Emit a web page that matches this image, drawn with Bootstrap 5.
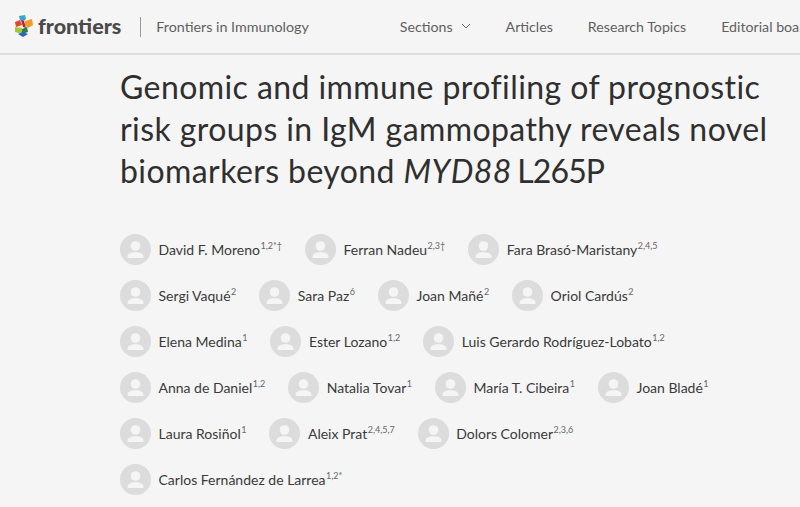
<!DOCTYPE html>
<html lang="en"><head><meta charset="utf-8">
<link href="https://cdn.jsdelivr.net/npm/bootstrap@5.3.0/dist/css/bootstrap.min.css" rel="stylesheet">
<style>
html,body{height:100%;overflow:hidden}
body{background:#f5f5f5;font-family:Lato,sans-serif;color:#333}
.topbar{height:55px;border-bottom:2px solid #dedede;white-space:nowrap;overflow:hidden;padding-left:14px}
.logomark{flex:none}
.brandname{font-weight:900;font-size:21.500px;color:#4a4a4a;margin-left:4px}
.sepbar{flex:none;width:1px;height:20px;background:#999;margin:0 15px 0 19px}
.journal{font-size:14.300px;color:#5f5f5f}
.mainnav{margin-left:91px;gap:35px;font-size:14.200px;color:#5f5f5f}
.navdrop{gap:8px}
.mainbox{padding:11px 0 0 120px}
.headline{font-size:32px;line-height:42px;font-weight:400;color:#2f2f2f;margin:0 0 34px;width:660px;letter-spacing:.42px}
.genecode{letter-spacing:-.9px;margin-left:-3px}
.authorrow{height:46px;gap:23px;white-space:nowrap}
.authorbox{gap:7.500px;font-size:14px;color:#3a3a3a}
.authorbox sup{font-size:9px;color:#666;top:-.65em;margin-left:.5px}
.avatar{width:31px;height:31px;flex:none}
</style></head><body>
<svg width="0" height="0" class="d-none"><symbol id="av" viewBox="0 0 31 31"><circle cx="15.5" cy="15.5" r="15.5" fill="#dcdcdc"/><circle cx="15.5" cy="12" r="4.8" fill="#f5f5f5"/><path d="M7.5 23c0-3.2 3-4.8 8-4.8s8 1.600 8 4.800c0 .6-.4 1-1 1h-14c-.6 0-1-.4-1-1z" fill="#f5f5f5"/></symbol></svg>
<header class="topbar d-flex align-items-center">
<svg class="logomark" width="20" height="23" viewBox="0 0 20 23"><path d="M1 7l5-2 2 5-6 2z" fill="#e8432e"/><path d="M5 1l6-1 1 4-3 3-3-2z" fill="#3aa7c9"/><path d="M11 6l7-2 1 6-5 3-3-3z" fill="#f39a25"/><path d="M7 5l3 1 2 7-3-1z" fill="#b3263a"/><path d="M1 12l7 1v6l-7-2z" fill="#a6c63a"/><path d="M8 14l5-2 1 5-6 2z" fill="#2f7d4e"/><path d="M4 19l5-2 5 2-5 3z" fill="#2667b8"/></svg>
<span class="brandname">frontiers</span><span class="sepbar"></span><span class="journal">Frontiers in Immunology</span>
<nav class="mainnav d-flex align-items-center"><span class="navdrop d-flex align-items-center">Sections <svg width="10" height="6" viewBox="0 0 10 6" fill="none" stroke="#666"><path d="M1 1l4 4 4-4"/></svg></span><span>Articles</span><span>Research Topics</span><span>Editorial board</span></nav>
</header>
<main class="mainbox">
<h1 class="headline">Genomic and immune profiling of prognostic risk groups in IgM gammopathy reveals novel biomarkers beyond <i>MYD88</i> <span class="genecode">L265P</span></h1>
<div class="authorrow d-flex align-items-center"><div class="authorbox d-flex align-items-center"><svg class="avatar"><use href="#av"/></svg><span>David F. Moreno<sup>1,2*†</sup></span></div><div class="authorbox d-flex align-items-center"><svg class="avatar"><use href="#av"/></svg><span>Ferran Nadeu<sup>2,3†</sup></span></div><div class="authorbox d-flex align-items-center"><svg class="avatar"><use href="#av"/></svg><span>Fara Brasó-Maristany<sup>2,4,5</sup></span></div></div>
<div class="authorrow d-flex align-items-center"><div class="authorbox d-flex align-items-center"><svg class="avatar"><use href="#av"/></svg><span>Sergi Vaqué<sup>2</sup></span></div><div class="authorbox d-flex align-items-center"><svg class="avatar"><use href="#av"/></svg><span>Sara Paz<sup>6</sup></span></div><div class="authorbox d-flex align-items-center"><svg class="avatar"><use href="#av"/></svg><span>Joan Mañé<sup>2</sup></span></div><div class="authorbox d-flex align-items-center"><svg class="avatar"><use href="#av"/></svg><span>Oriol Cardús<sup>2</sup></span></div></div>
<div class="authorrow d-flex align-items-center"><div class="authorbox d-flex align-items-center"><svg class="avatar"><use href="#av"/></svg><span>Elena Medina<sup>1</sup></span></div><div class="authorbox d-flex align-items-center"><svg class="avatar"><use href="#av"/></svg><span>Ester Lozano<sup>1,2</sup></span></div><div class="authorbox d-flex align-items-center"><svg class="avatar"><use href="#av"/></svg><span>Luis Gerardo Rodríguez-Lobato<sup>1,2</sup></span></div></div>
<div class="authorrow d-flex align-items-center"><div class="authorbox d-flex align-items-center"><svg class="avatar"><use href="#av"/></svg><span>Anna de Daniel<sup>1,2</sup></span></div><div class="authorbox d-flex align-items-center"><svg class="avatar"><use href="#av"/></svg><span>Natalia Tovar<sup>1</sup></span></div><div class="authorbox d-flex align-items-center"><svg class="avatar"><use href="#av"/></svg><span>María T. Cibeira<sup>1</sup></span></div><div class="authorbox d-flex align-items-center"><svg class="avatar"><use href="#av"/></svg><span>Joan Bladé<sup>1</sup></span></div></div>
<div class="authorrow d-flex align-items-center"><div class="authorbox d-flex align-items-center"><svg class="avatar"><use href="#av"/></svg><span>Laura Rosiñol<sup>1</sup></span></div><div class="authorbox d-flex align-items-center"><svg class="avatar"><use href="#av"/></svg><span>Aleix Prat<sup>2,4,5,7</sup></span></div><div class="authorbox d-flex align-items-center"><svg class="avatar"><use href="#av"/></svg><span>Dolors Colomer<sup>2,3,6</sup></span></div></div>
<div class="authorrow d-flex align-items-center"><div class="authorbox d-flex align-items-center"><svg class="avatar"><use href="#av"/></svg><span>Carlos Fernández de Larrea<sup>1,2*</sup></span></div></div>
</main>
<script src="https://cdn.jsdelivr.net/npm/bootstrap@5.3.0/dist/js/bootstrap.bundle.min.js"></script>
</body></html>
